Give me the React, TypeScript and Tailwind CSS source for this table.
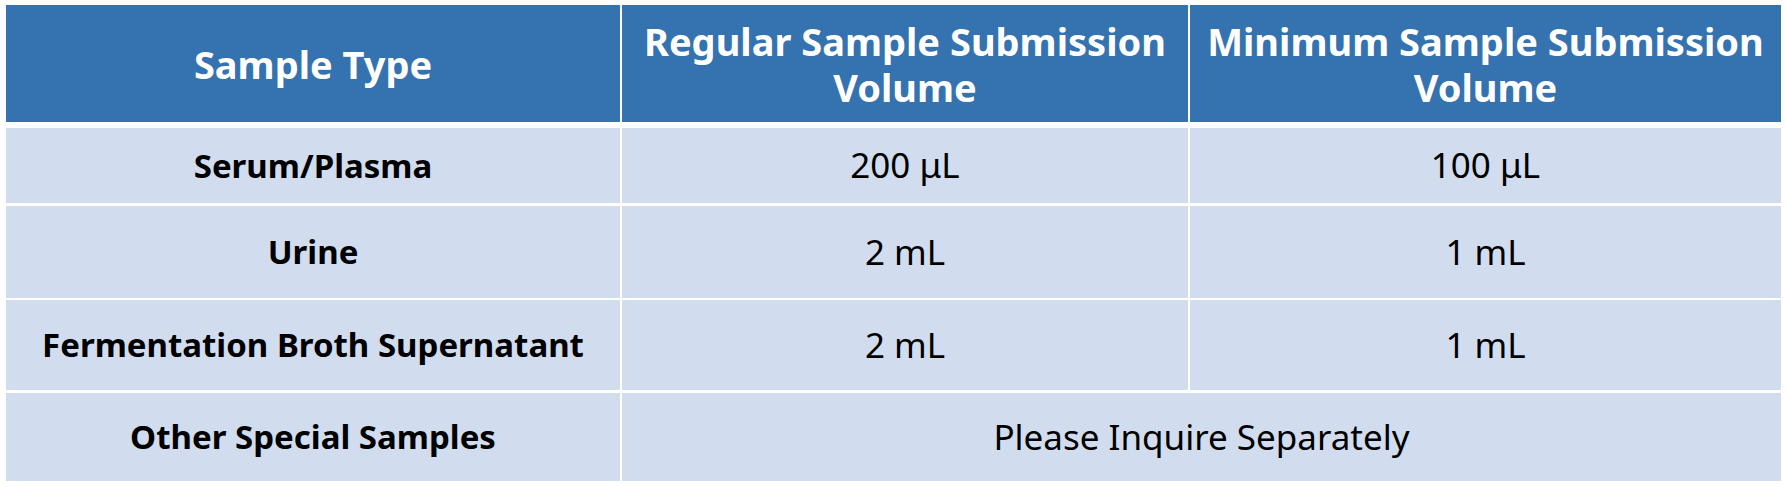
import React from "react";

const font = { fontFamily: '"Noto Sans", "Open Sans", sans-serif' };

function Cell({
  children,
  className = "",
}: {
  children: React.ReactNode;
  className?: string;
}) {
  return (
    <div className={`flex items-center justify-center text-center ${className}`}>
      {children}
    </div>
  );
}

export default function App() {
  const rows = [
    { t: "Serum/Plasma", a: "200 μL", b: "100 μL", h: "h-[75px]", mb: "mb-[3px]" },
    { t: "Urine", a: "2 mL", b: "1 mL", h: "h-[92px]", mb: "mb-[2px]" },
    { t: "Fermentation Broth Supernatant", a: "2 mL", b: "1 mL", h: "h-[90px]", mb: "mb-[3px]" },
  ];
  return (
    <div
      className="w-[1787px] h-[487px] bg-white pt-[5px] pl-[6px]"
      style={font}
    >
      <div className="flex flex-col w-[1775px]">
        <div className="flex gap-[2px] h-[117px] mb-[6px] text-white font-bold text-[38px] leading-[46px]">
          <Cell className="w-[614px] bg-[#3572B0]">Sample Type</Cell>
          <Cell className="w-[566px] bg-[#3572B0] px-2">
            Regular Sample Submission Volume
          </Cell>
          <Cell className="w-[591px] bg-[#3572B0] px-2">
            Minimum Sample Submission Volume
          </Cell>
        </div>
        {rows.map((r) => (
          <div key={r.t} className={`flex gap-[2px] ${r.h} ${r.mb} text-black text-[35px]`}>
            <Cell className="w-[614px] bg-[#D1DDEE] font-bold text-[33px]">{r.t}</Cell>
            <Cell className="w-[566px] bg-[#D1DDEE]">{r.a}</Cell>
            <Cell className="w-[591px] bg-[#D1DDEE]">{r.b}</Cell>
          </div>
        ))}
        <div className="flex gap-[2px] h-[88px] text-black text-[35px]">
          <Cell className="w-[614px] bg-[#D1DDEE] font-bold text-[33px]">Other Special Samples</Cell>
          <Cell className="w-[1159px] bg-[#D1DDEE]">Please Inquire Separately</Cell>
        </div>
      </div>
    </div>
  );
}
